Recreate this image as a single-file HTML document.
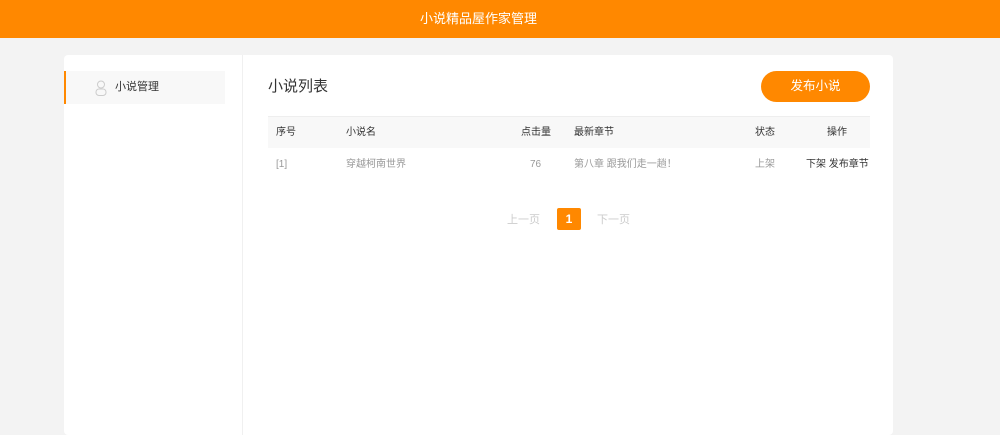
<!DOCTYPE html>
<html><head><meta charset="utf-8"><style>
*{margin:0;padding:0;box-sizing:border-box}
body{width:1000px;height:429px;overflow:hidden;background:#f3f3f3;font-family:"Liberation Sans","Noto Sans CJK SC",sans-serif;font-size:12px;color:#333;position:relative}
.hd{position:absolute;left:0;top:0;width:1000px;height:38px;background:#ff8800;color:#fff;font-size:13px;line-height:38px}
.hd span{position:absolute;left:420px;top:0}
.panel{position:absolute;left:64px;top:55px;width:829px;height:380px;background:#fff;border-radius:4px}
.side{position:absolute;left:0;top:0;width:179px;height:380px;border-right:1px solid #f0f0f0}
.item{position:absolute;left:0;top:16px;width:161px;height:33px;background:#f8f8f8;border-left:2px solid #ff8800;line-height:33px;padding-left:49px;font-size:11px;color:#333}
.ic{position:absolute;left:29px;top:9px}
.abs{position:absolute;white-space:nowrap}
.btn{position:absolute;left:697px;top:16px;width:109px;height:31px;border-radius:16px;background:#ff8800;color:#fff;font-size:12.5px;text-align:center;line-height:31px}
.th{position:absolute;left:204px;top:61px;width:602px;height:32px;background:#f8f8f8;border-top:1px solid #eee}
.th span,.tr span{position:absolute;top:0;line-height:32px;font-size:10px;white-space:nowrap}
.tr{position:absolute;left:204px;top:93px;width:602px;height:33px}
.tr span{color:#999;line-height:33px}
</style></head><body>
<div class="hd"><span>小说精品屋作家管理</span></div>
<div class="panel">
 <div class="side"><div class="item"><svg class="ic" width="12" height="16" viewBox="0 0 12 16"><circle cx="6" cy="4.5" r="3.5" fill="none" stroke="#ccc" stroke-width="1"/><rect x="1" y="9" width="10" height="6.5" rx="3" fill="none" stroke="#ccc" stroke-width="1"/></svg>小说管理</div></div>
 <div class="abs" style="left:204px;top:20px;font-size:15px;color:#333">小说列表</div>
 <div class="btn">发布小说</div>
 <div class="th"><span style="left:8px">序号</span><span style="left:78px">小说名</span><span style="left:253px">点击量</span><span style="left:306px">最新章节</span><span style="left:487px">状态</span><span style="left:559px">操作</span></div>
 <div class="tr"><span style="left:8px">[1]</span><span style="left:78px">穿越柯南世界</span><span style="left:262px">76</span><span style="left:306px">第八章 跟我们走一趟！</span><span style="left:487px">上架</span><span style="left:538px;color:#333">下架 发布章节</span></div>
 <div class="abs" style="left:443px;top:156px;color:#ccc;font-size:11px">上一页</div>
 <div class="abs" style="left:493px;top:153px;width:24px;height:22px;background:#ff8800;color:#fff;border-radius:2px;text-align:center;line-height:22px;font-weight:bold">1</div>
 <div class="abs" style="left:533px;top:156px;color:#ccc;font-size:11px">下一页</div>
</div>
</body></html>
